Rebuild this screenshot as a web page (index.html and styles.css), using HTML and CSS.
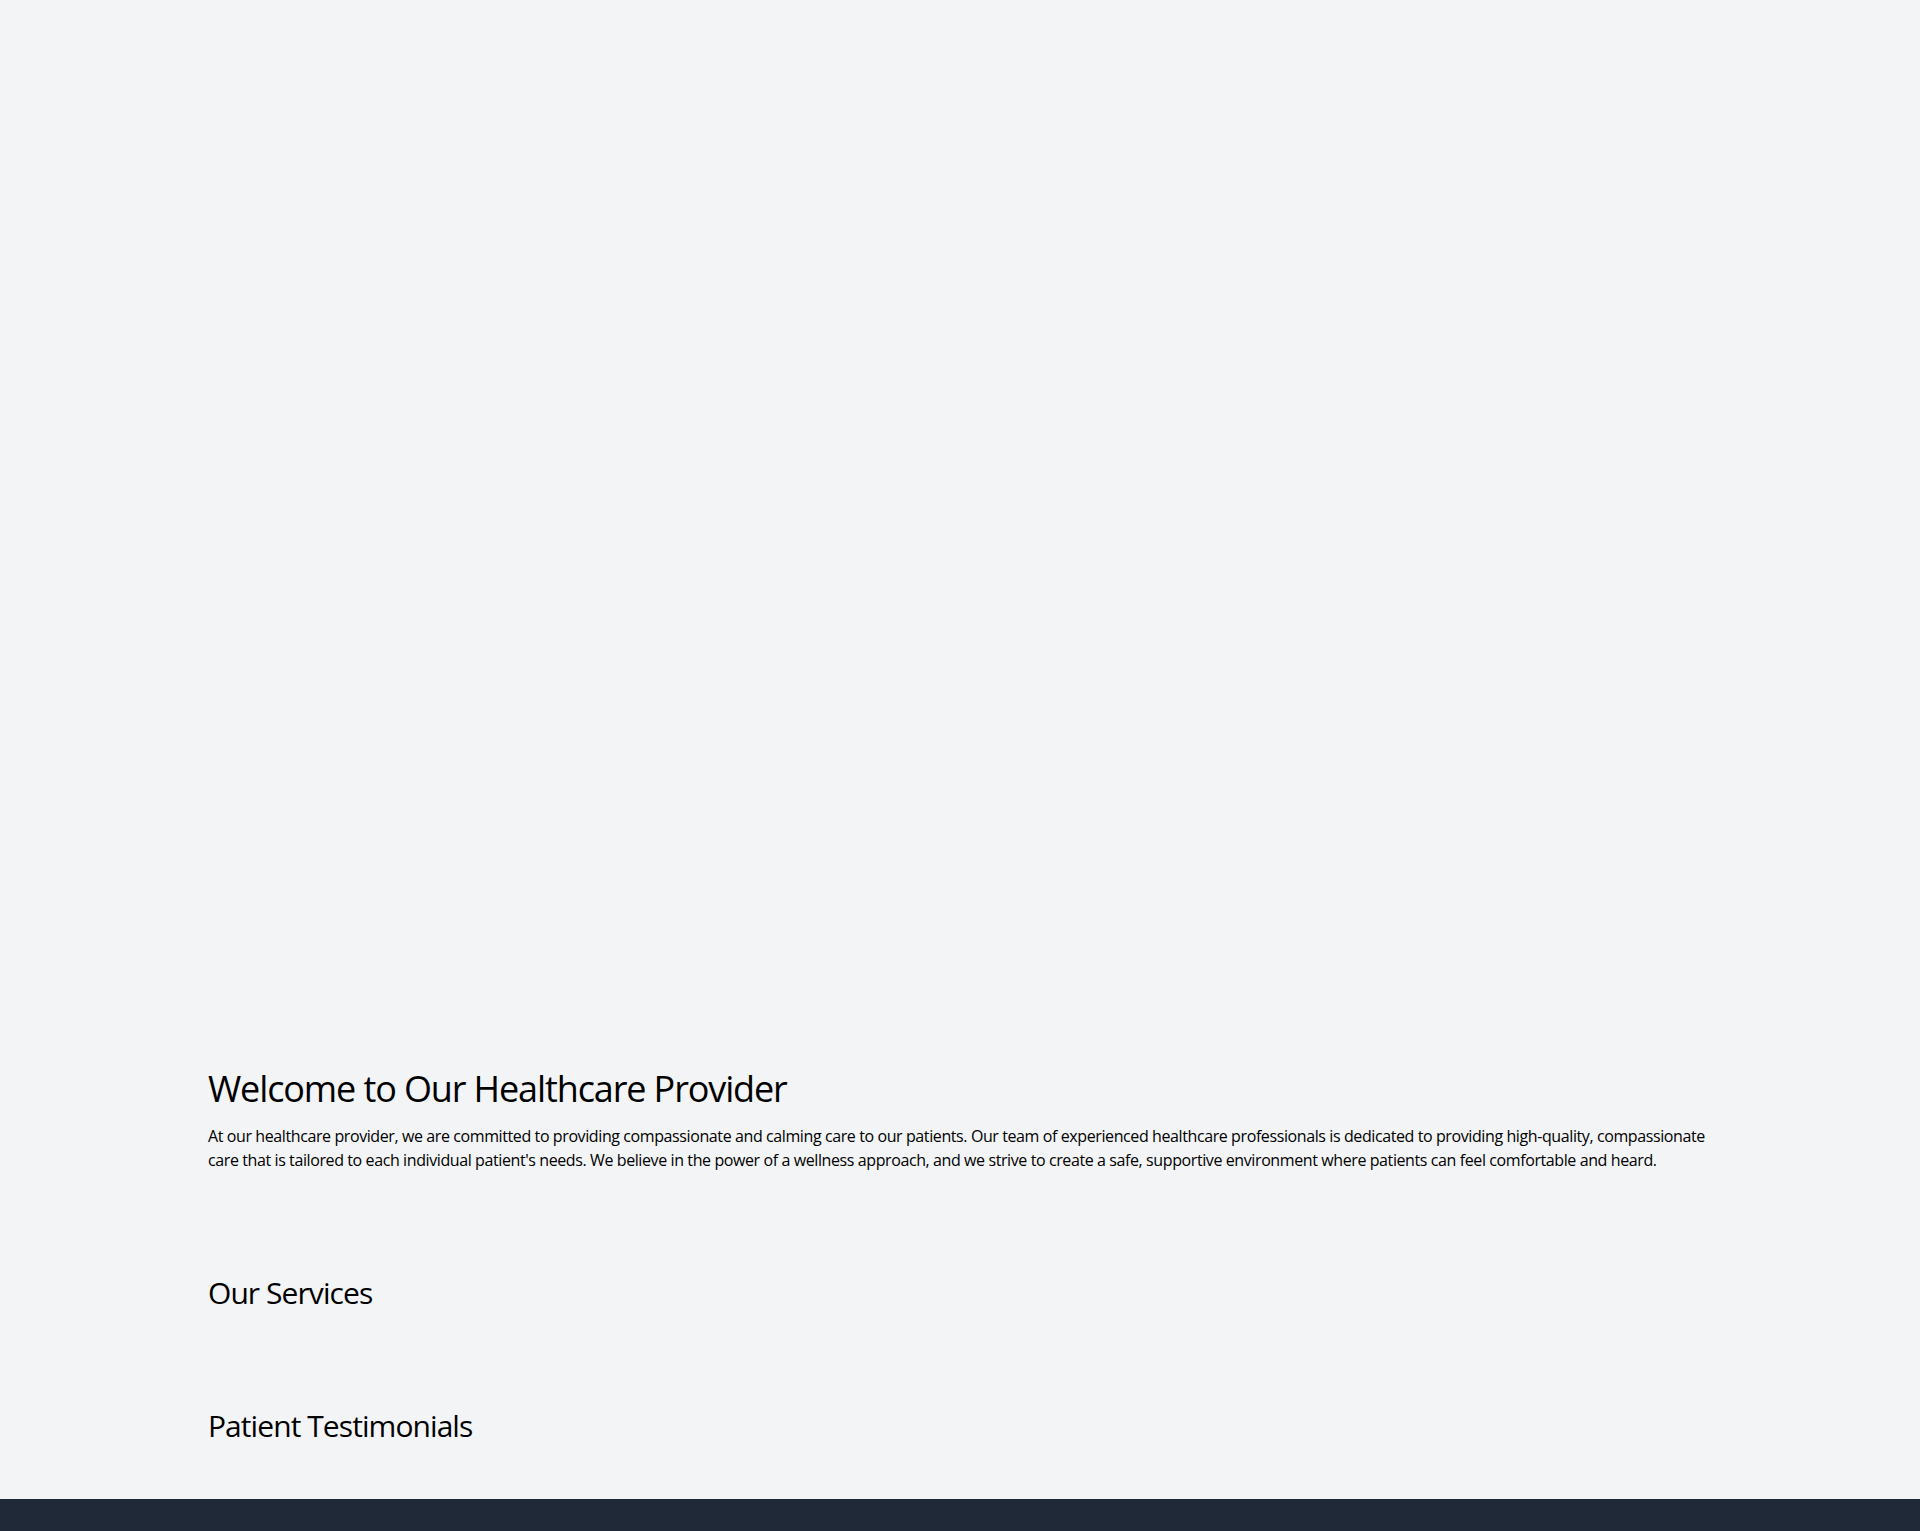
FILE: index.html
```html
<!DOCTYPE html>
<html lang="en">
<head>
<meta charset="utf-8">
<title>Healthcare Provider</title>
<link rel="stylesheet" href="styles.css">
</head>
<body>
<header class="hero"></header>
<main>
  <section class="section welcome">
    <div class="container">
      <h1 class="title">Welcome to Our Healthcare Provider</h1>
      <p class="lead">At our healthcare provider, we are committed to providing compassionate and calming care to our patients. Our team of experienced healthcare professionals is dedicated to providing high-quality, compassionate care that is tailored to each individual patient's needs. We believe in the power of a wellness approach, and we strive to create a safe, supportive environment where patients can feel comfortable and heard.</p>
    </div>
  </section>
  <section class="section services">
    <div class="container">
      <h2 class="subtitle">Our Services</h2>
    </div>
  </section>
  <section class="section testimonials">
    <div class="container">
      <h2 class="subtitle">Patient Testimonials</h2>
    </div>
  </section>
</main>
<footer class="footer"></footer>
</body>
</html>
```
FILE: styles.css
```css
html, body {
  margin: 0;
  padding: 0;
}
body {
  background: #f3f4f6;
  color: #000;
  font-family: "Open Sans", "Noto Sans", sans-serif;
  letter-spacing: -0.025em;
}
.hero {
  height: 1021px;
}
.container {
  max-width: 1504px;
  margin: 0 auto;
  padding: 0 16px;
}
.section {
  padding: 48px 0;
}
.services {
  padding-top: 55px;
}
.testimonials {
  padding-top: 49px;
  padding-bottom: 55px;
}
.title {
  margin: 0 0 15px;
  font-size: 36px;
  line-height: 40px;
  font-weight: 400;
  letter-spacing: -0.031em;
}
.lead {
  margin: 0;
  font-size: 16px;
  line-height: 24px;
}
.subtitle {
  margin: 0;
  font-size: 30px;
  line-height: 36px;
  font-weight: 400;
  letter-spacing: -0.031em;
}
.footer {
  background: #1f2937;
  height: 80px;
}
```
